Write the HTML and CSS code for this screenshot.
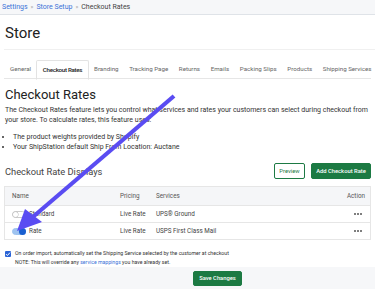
FILE: index.html
```html
<!DOCTYPE html>
<html>
<head>
<meta charset="utf-8">
<link rel="stylesheet" href="styles.css">
</head>
<body>
<div class="crumbs"><a>Settings</a><span class="sep">»</span><a>Store Setup</a><span class="sep">»</span><span class="cur">Checkout Rates</span></div>
<div class="page">
  <h1 class="title">Store</h1>
  <div class="divider"></div>
  <div class="tabs">
    <span class="tab">General</span>
    <span class="tab active">Checkout Rates</span>
    <span class="tab">Branding</span>
    <span class="tab">Tracking Page</span>
    <span class="tab">Returns</span>
    <span class="tab">Emails</span>
    <span class="tab">Packing Slips</span>
    <span class="tab">Products</span>
    <span class="tab">Shipping Services</span>
  </div>
  <h2 class="h2">Checkout Rates</h2>
  <p class="intro">The Checkout Rates feature lets you control what services and rates your customers can select during checkout from your store. To calculate rates, this feature uses:</p>
  <ul class="bullets">
    <li>The product weights provided by Shopify</li>
    <li>Your ShipStation default Ship From Location: Auctane</li>
  </ul>
  <div class="section-head">
    <h3 class="h3">Checkout Rate Displays</h3>
    <div class="btns">
      <button class="btn outline">Preview</button>
      <button class="btn solid add">Add Checkout Rate</button>
    </div>
  </div>
  <div class="table">
    <div class="row head">
      <div class="c-name">Name</div>
      <div class="c-pricing">Pricing</div>
      <div class="c-services">Services</div>
      <div class="c-action">Action</div>
    </div>
    <div class="row">
      <div class="c-name"><span class="toggle"></span>Standard</div>
      <div class="c-pricing">Live Rate</div>
      <div class="c-services">UPS® Ground</div>
      <div class="c-action"><span class="dots"><i></i><i></i><i></i></span></div>
    </div>
    <div class="row">
      <div class="c-name"><span class="toggle on"></span>Rate</div>
      <div class="c-pricing">Live Rate</div>
      <div class="c-services">USPS First Class Mail</div>
      <div class="c-action"><span class="dots"><i></i><i></i><i></i></span></div>
    </div>
  </div>
  <div class="opt">
    <span class="check"><svg width="6" height="6" viewBox="0 0 6 6"><path d="M1 3.1 L2.4 4.5 L5 1.6" fill="none" stroke="#fff" stroke-width="1"/></svg></span>
    <div class="opt-text">
      <div>On order import, automatically set the Shipping Service selected by the customer at checkout</div>
      <div>NOTE: This will override any <a>service mappings</a> you have already set.</div>
    </div>
  </div>
</div>
<div class="footer"><button class="btn solid save">Save Changes</button></div>
<svg class="arrow" width="375" height="289" viewBox="0 0 375 289">
  <line x1="174" y1="96" x2="27" y2="222" stroke="#5a4cf2" stroke-width="4.2" stroke-linecap="butt"/>
  <path d="M17 231 L25 209 L42 222 Z" fill="#5a4cf2"/>
</svg>
</body>
</html>
```
FILE: styles.css
```css
* { box-sizing: border-box; }
html, body { margin: 0; padding: 0; }
body {
  font-family: Roboto, "Liberation Sans", sans-serif;
  color: #333;
  background: #fff;
  width: 375px;
  height: 289px;
  overflow: hidden;
  position: relative;
}
a { color: #3a72d8; text-decoration: none; }
.crumbs {
  height: 15px;
  background: #f6f7f9;
  border-bottom: 1px solid #dfe3e8;
  font-size: 7px;
  line-height: 14px;
  padding-left: 2px;
  color: #444;
}
.crumbs .sep { color: #999; margin: 0 3px; font-size: 6px; }
.page { padding: 0 4px 0 4px; }
.title {
  margin: 0;
  font-weight: 400;
  font-size: 15px;
  line-height: 18px;
  padding: 9px 1px 7px;
  color: #222;
}
.divider { height: 1px; background: #f0f0f0; margin-right: -4px; }
.tabs {
  display: flex;
  margin-top: 10px;
  height: 19px;
  border-bottom: 1px solid #e6e6e6;
  font-size: 6.2px;
  color: #666;
}
.tab { padding: 0 5.3px; line-height: 19px; white-space: nowrap; }
.tab:first-child { padding-left: 6px; }
.tab.active {
  border: 1px solid #e3e3e3;
  border-bottom: 1px solid #fff;
  border-radius: 2px 2px 0 0;
  color: #222;
  font-weight: 500;
  letter-spacing: -0.3px;
  height: 20px;
  line-height: 18px;
  padding: 0 5.5px;
}
.h2 {
  margin: 8px 0 0 1px;
  font-weight: 400;
  font-size: 13px;
  line-height: 15px;
  color: #222;
}
.intro {
  margin: 3px 0 0 1px;
  font-size: 7px;
  line-height: 10px;
  color: #333;
}
.bullets {
  margin: 7px 0 0 0;
  padding-left: 9px;
  font-size: 7px;
  line-height: 10px;
}
.section-head {
  display: flex;
  align-items: center;
  justify-content: space-between;
  margin-top: 11px;
}
.h3 { margin: 0 0 0 1px; font-weight: 400; font-size: 9.3px; color: #444; }
.btns { display: flex; gap: 6px; }
.btn {
  font-family: inherit;
  font-size: 5.8px;
  height: 16px;
  padding: 0;
  border-radius: 2px;
  cursor: pointer;
}
.btn.outline { width: 31px; background: #fff; border: 1px solid #1d7a44; color: #1d7a44; }
.btn.solid { background: #1c7a43; border: 1px solid #1c7a43; color: #fff; font-weight: 500; }
.btn.add { width: 60px; }
.table {
  margin-top: 7px;
  border: 1px solid #e6e6e6;
  font-size: 6.3px;
  color: #444;
}
.row {
  display: flex;
  align-items: center;
  height: 17px;
  border-top: 1px solid #e6e6e6;
}
.row.head { border-top: 0; background: #f5f6f8; height: 18px; color: #555; }
.c-name { width: 115px; padding-left: 7px; display: flex; align-items: center; }
.c-pricing { width: 36px; }
.c-services { flex: 1; }
.c-action { width: 30px; text-align: right; padding-right: 5px; }
.dots { display: inline-flex; gap: 1px; margin-right: 3px; vertical-align: middle; }
.dots i { width: 2px; height: 2px; border-radius: 50%; background: #555; display: block; }
.toggle {
  width: 14px;
  height: 7px;
  border-radius: 4px;
  border: 1px solid #ccc;
  background: #fff;
  margin-right: 3px;
  position: relative;
}
.toggle::after {
  content: "";
  position: absolute;
  top: 0;
  left: 0;
  width: 5px;
  height: 5px;
  border-radius: 50%;
  background: #fff;
  box-shadow: 0 0 0 0.5px #bbb;
}
.toggle.on { background: #9ec3f0; border-color: #9ec3f0; }
.toggle.on::after { left: auto; right: -1px; top: -1px; width: 7px; height: 7px; background: #1a5fd0; box-shadow: none; }
.opt {
  display: flex;
  gap: 4px;
  margin-top: 9px;
  font-size: 5.2px;
  line-height: 9px;
  color: #333;
}
.check {
  width: 6px;
  height: 6px;
  background: #2a63d6;
  border-radius: 1px;
  margin-top: 1.5px;
  margin-left: 1px;
  display: flex;
}
.footer {
  position: absolute;
  left: 0;
  right: 0;
  bottom: 0;
  height: 22px;
  background: #f6f7f9;
  display: flex;
  align-items: center;
  justify-content: center;
  padding-left: 60px;
}
.footer .save { height: 15px; width: 49px; }
.arrow { position: absolute; left: 0; top: 0; pointer-events: none; }
```
